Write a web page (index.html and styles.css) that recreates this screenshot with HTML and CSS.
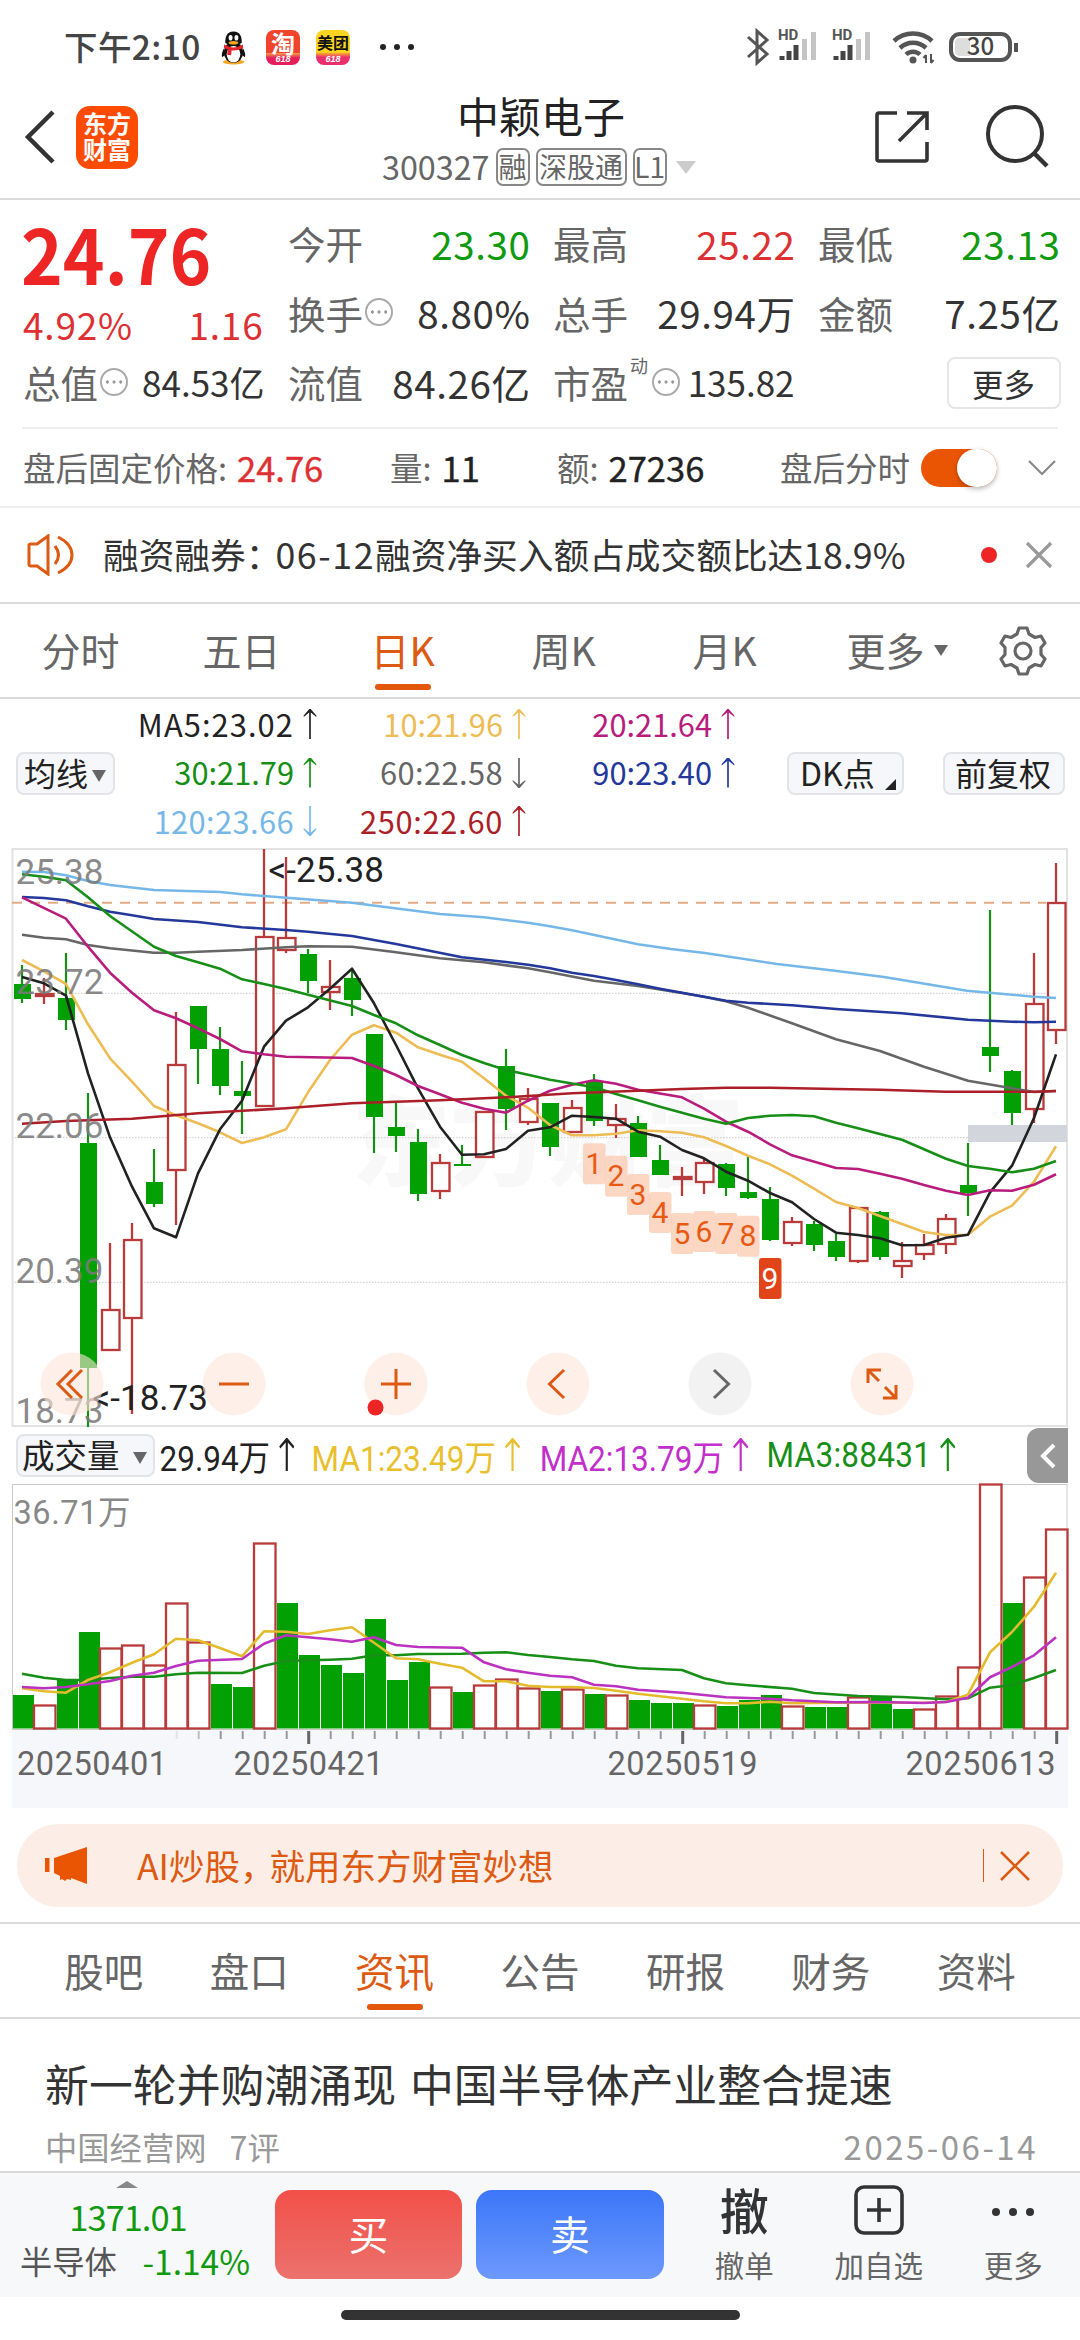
FILE: index.html
```html
<!DOCTYPE html>
<html lang="zh-CN">
<head>
<meta charset="utf-8">
<title>中颖电子 300327</title>
<link rel="stylesheet" href="styles.css">
</head>
<body>
<div class="phone">
  <div class="status">
    <span class="clock">下午2:10</span>
    <svg class="app" viewBox="0 0 36 36"><ellipse cx="18" cy="33" rx="11" ry="2.6" fill="#f5a623"/><path d="M8 19Q5 25 6.500 28L10 25Z M28 19Q31 25 29.500 28L26 25Z" fill="#111"/><ellipse cx="18" cy="23" rx="10" ry="11" fill="#111"/><ellipse cx="18" cy="25" rx="7" ry="8.500" fill="#fff"/><path d="M18 1.500C11 1.500 9.500 7 9.500 13Q18 20 26.500 13C26.500 7 25 1.500 18 1.500Z" fill="#111"/><ellipse cx="15" cy="8" rx="2" ry="2.900" fill="#fff"/><ellipse cx="21" cy="8" rx="2" ry="2.900" fill="#fff"/><ellipse cx="18" cy="13" rx="5" ry="1.800" fill="#f5a623"/><path d="M8.500 15Q18 21 27.500 15L28 18.500Q22 21.500 16 21L15.500 26L11.500 25.500L12 20Q9.500 19.500 8 18Z" fill="#e5242b"/></svg>
    <span class="app taobao"><b>淘</b><i>618</i></span>
    <span class="app meituan"><b>美团</b><i>618</i></span>
    <span class="dots"><i></i><i></i><i></i></span>
    <svg class="sys" viewBox="0 0 280 40" fill="none">
      <path d="M6 10L25 27L15 36V4L25 13L6 30" stroke="#555" stroke-width="3"/>
      <g id="sig1"><text x="36" y="13" class="hd">HD</text><path d="M40 33V29M47 33V24M54 33V18" stroke="#444" stroke-width="5"/><path d="M62 33V12M71 33V5" stroke="#c4c4c4" stroke-width="5" transform="translate(.5 0)"/></g>
      <use href="#sig1" x="54"/>
      <path d="M152 14A28 28 0 0 1 190 14M158 21A19 19 0 0 1 184 21M164 27.500A10 10 0 0 1 178 27.500" stroke="#555" stroke-width="4.500"/><circle cx="171" cy="33" r="3.500" fill="#555"/>
      <path d="M184 28V36M184 28L181.500 31M189 27V36M189 36L191.500 33" stroke="#555" stroke-width="2"/>
      <rect x="209" y="7" width="59" height="26" rx="9" stroke="#555" stroke-width="4"/><path d="M218 11h10v18h-10q-5 0-5-5v-8q0-5 5-5z" fill="#ddd"/><text x="238.500" y="28" class="batt">30</text><path d="M274 16V25" stroke="#555" stroke-width="4"/>
    </svg>
  </div>

  <header class="head">
    <svg class="back" viewBox="0 0 32 56"><path d="M29 3L4 28L29 53" fill="none" stroke="#333" stroke-width="4.500"/></svg>
    <div class="logo">东方<br>财富</div>
    <div class="name">
      <h1>中颖电子</h1>
      <div class="code"><span>300327</span><em>融</em><em>深股通</em><em>L1</em><s></s></div>
    </div>
    <svg class="share" viewBox="0 0 56 56"><path d="M23 5H5Q3 5 3 7V51Q3 53 5 53H51Q53 53 53 51V34M33 5H53V22M53 5L25 33" fill="none" stroke="#333" stroke-width="3.600"/></svg>
    <svg class="search" viewBox="0 0 70 70"><circle cx="30" cy="30" r="27" fill="none" stroke="#333" stroke-width="4"/><path d="M49 49L62 62" stroke="#333" stroke-width="4.500"/></svg>
  </header>

  <section class="quote">
    <div class="col main">
      <strong>24.76</strong>
      <div class="chg"><span>4.92%</span><span>1.16</span></div>
      <div class="cell small"><label>总值</label><i class="tip"></i><span>84.53亿</span></div>
    </div>
    <div class="col">
      <div class="cell"><label>今开</label><span class="dn">23.30</span></div>
      <div class="cell"><label>换手</label><i class="tip"></i><span>8.80%</span></div>
      <div class="cell"><label>流值</label><span>84.26亿</span></div>
    </div>
    <div class="col">
      <div class="cell"><label>最高</label><span class="up">25.22</span></div>
      <div class="cell"><label>总手</label><span>29.94万</span></div>
      <div class="cell small"><label>市盈</label><sup>动</sup><i class="tip"></i><span>135.82</span></div>
    </div>
    <div class="col">
      <div class="cell"><label>最低</label><span class="dn">23.13</span></div>
      <div class="cell"><label>金额</label><span>7.25亿</span></div>
      <div class="cell end"><button class="more">更多</button></div>
    </div>
  </section>

  <section class="after">
    <div>盘后固定价格: <b class="up">24.76</b></div>
    <div>量: <b>11</b></div>
    <div>额: <b>27236</b></div>
    <div>盘后分时</div>
    <span class="toggle"></span>
    <svg class="chev" viewBox="0 0 30 18"><path d="M2 2L15 15L28 2" fill="none" stroke="#888" stroke-width="2.200"/></svg>
  </section>

  <section class="notice">
    <svg class="speaker" viewBox="0 0 48 42" fill="none" stroke="#dd5a12" stroke-width="3"><path d="M2 11Q2 10 4 10H10L21 2V40L10 32H4Q2 32 2 30Z"/><path d="M28 12Q35 21 28 30M31 3Q45 10 45 21Q45 32 31 39"/></svg>
    <p>融资融券<span class="punct">：</span><span class="day">06-12</span>融资净买入额占成交额比达18.9%</p>
    <i class="reddot"></i>
    <svg class="x" viewBox="0 0 28 28"><path d="M2 2L26 26M26 2L2 26" stroke="#999" stroke-width="3.200"/></svg>
  </section>

  <nav class="periods">
    <a>分时</a><a>五日</a><a class="on">日K</a><a>周K</a><a>月K</a><a>更多<s></s></a>
    <svg class="gear" viewBox="0 0 48 50" fill="none" stroke="#666" stroke-width="3.200" stroke-linejoin="round"><path d="M20 2H28L30 8L36 11.500L42 10L46 17L42 21.500V28.500L46 33L42 40L36 38.500L30 42L28 48H20L18 42L12 38.500L6 40L2 33L6 28.500V21.500L2 17L6 10L12 11.500L18 8Z"/><circle cx="24" cy="25" r="8"/></svg>
  </nav>

  <section class="legend">
    <button class="chip">均线<s></s></button>
    <div class="mas">
      <span class="c5">MA5:23.02<u></u></span><span class="c10">10:21.96<u></u></span><span class="c20">20:21.64<u></u></span>
      <span class="c30">30:21.79<u></u></span><span class="c60">60:22.58<u class="d"></u></span><span class="c90">90:23.40<u></u></span>
      <span class="c120">120:23.66<u class="d"></u></span><span class="c250">250:22.60<u></u></span>
    </div>
    <button class="chip dk">DK点<s></s></button>
    <button class="chip fq">前复权</button>
  </section>

  <section class="kline">
    <svg id="kchart" width="1080" height="580" viewBox="0 848 1080 580"></svg>
    <div class="tools">
      <svg viewBox="-32 -32 64 64"><circle r="31.500"/><path d="M0 -14L-14 0L0 14M10 -14L-4 0L10 14"/></svg>
      <svg viewBox="-32 -32 64 64"><circle r="31.500"/><path d="M-15 0H15"/></svg>
      <svg viewBox="-32 -32 64 64"><circle r="31.500"/><path d="M-15 0H15M0 -15V15"/><circle class="dot" cx="-20.500" cy="23.500" r="8"/></svg>
      <svg viewBox="-32 -32 64 64"><circle r="31.500"/><path d="M6 -14L-8.500 0L6 14"/></svg>
      <svg class="off" viewBox="-32 -32 64 64"><circle r="31.500"/><path d="M-6 -14L8.500 0L-6 14"/></svg>
      <svg viewBox="-32 -32 64 64"><circle r="31.500"/><path d="M-14 -1V-14H-1M-14 -14L-3 -3M14 1V14H1M14 14L3 3"/></svg>
    </div>
  </section>

  <section class="vhead">
    <button class="chip">成交量<s></s></button>
    <div class="vlegend"><span class="v0">29.94万<u></u></span><span class="v1">MA1:23.49万<u></u></span><span class="v2">MA2:13.79万<u></u></span><span class="v3">MA3:88431<u></u></span></div>
    <button class="fold"><svg viewBox="0 0 16 26"><path d="M14 2L3 13L14 24" fill="none" stroke="#fff" stroke-width="4"/></svg></button>
  </section>
  <svg id="vchart" class="vchart" width="1080" height="325" viewBox="0 1483 1080 325"></svg>

  <div class="banner">
    <svg class="horn" viewBox="0 0 44 38" fill="#ea5504"><path d="M0 11H4.500V25H0ZM9 11L42 0V37L26 31V33L22 32L20 34L17 32L15 33V29L9 26Z"/></svg>
    <p>AI炒股<span class="punct">，</span>就用东方财富妙想</p>
    <i></i>
    <svg class="x" viewBox="0 0 30 30"><path d="M1 1L29 29M29 1L1 29" stroke="#dd5a12" stroke-width="2.600"/></svg>
  </div>

  <nav class="tabs"><a>股吧</a><a>盘口</a><a class="on">资讯</a><a>公告</a><a>研报</a><a>财务</a><a>资料</a></nav>

  <article class="news">
    <h2>新一轮并购潮涌现 中国半导体产业整合提速</h2>
    <div class="meta"><span>中国经营网</span><span>7评</span><time>2025-06-14</time></div>
  </article>

  <footer class="bar">
    <div class="index"><s></s><b>1371.01</b><div><span>半导体</span><em>-1.14%</em></div></div>
    <button class="trade buy">买</button>
    <button class="trade sell">卖</button>
    <div class="act first"><strong>撤</strong><span>撤单</span></div>
    <div class="act"><svg viewBox="0 0 50 50" fill="none" stroke="#333" stroke-width="3.600"><rect x="2" y="2" width="46" height="46" rx="8"/><path d="M25 13V37M13 25H37"/></svg><span>加自选</span></div>
    <div class="act"><svg viewBox="0 0 50 50" fill="#333"><circle cx="8" cy="27" r="4"/><circle cx="25" cy="27" r="4"/><circle cx="42" cy="27" r="4"/></svg><span>更多</span></div>
  </footer>
  <div class="home"><i></i></div>
</div>
<script src="chart.js"></script>
</body>
</html>
```
FILE: styles.css
```css
* { box-sizing: border-box; margin: 0; padding: 0; }
body { width: 1080px; background: #fff; color: #333; font-family: "Noto Sans CJK SC", "Noto Sans", sans-serif; line-height: 1; }
button { font: inherit; color: inherit; background: none; border: 0; }
i, em { font-style: normal; }
s, u { text-decoration: none; display: inline-block; flex: none; }
svg { display: block; flex: none; }
.phone { width: 1080px; height: 2340px; overflow: hidden; display: flex; flex-direction: column; }
.phone > * { flex: none; }
.up { color: #dd3033 !important; }
.dn { color: #109a10 !important; }

/* status bar */
.status { height: 92px; padding: 2px 0 0 64px; display: flex; align-items: center; }
.clock { width: 152px; font-size: 33.500px; font-weight: 500; color: #444; letter-spacing: .4px; padding-bottom: 2px; }
.app { width: 35px; height: 35px; margin-right: 15px; border-radius: 8px; }
.taobao, .meituan { display: flex; flex-direction: column; align-items: center; color: #fff; }
.app b { font-size: 24px; line-height: 25px; }
.app i { font: italic 700 9px/9px "Liberation Sans", sans-serif; }
.taobao { background: linear-gradient(#f1442c 0 65%, #f5a04a 66%, #e61e5c 80%); width: 34px; margin-right: 16px; }
.meituan { background: linear-gradient(#fbd51f 0 64%, #f9b52c 65%, #ea2f6d 78%); width: 34px; }
.meituan b { font-size: 16px; line-height: 25px; color: #111; }
.dots { display: flex; gap: 8px; margin-left: 15px; }
.dots i { width: 6px; height: 6px; border-radius: 3px; background: #222; }
.sys { width: 280px; height: 40px; margin-left: auto; transform: translateX(-58px); }
.hd { font: 700 15px Roboto, sans-serif; fill: #555; }
.batt { font: 500 24px "Noto Sans CJK SC", sans-serif; fill: #444; text-anchor: middle; }

/* title bar */
.head { height: 108px; border-bottom: 2px solid #dadada; display: grid; grid-template-columns: 76px 62px 530px 206px 111px 1fr; }
.back { width: 32px; height: 56px; margin: 17px 0 0 24px; }
.logo { width: 62px; height: 63px; margin-top: 14px; border-radius: 14px; background: #fe4b04; color: #fff; font-size: 24px; font-weight: 700; line-height: 26px; text-align: center; padding-top: 4px; }
.name { padding-left: 244px; white-space: nowrap; grid-column: 3 / span 2; }
h1 { font-size: 42px; font-weight: 400; line-height: 48px; color: #222; margin: -1px 0 0 75px; }
.code { display: flex; align-items: center; height: 40px; margin-top: 8px; font-size: 32.300px; color: #666; gap: 6px; }
.code span { margin-top: -1px; }
.code em { height: 38px; border: 2px solid #888; border-radius: 7px; font-size: 28px; line-height: 32px; width: 34px; display: flex; justify-content: center; }
.code em:nth-of-type(2) { width: 91px; }
.code s { border: 10px solid transparent; border-top: 13px solid #ccc; border-bottom: 0; margin-left: 3px; }
.share { margin-top: 16px; width: 56px; height: 56px; grid-column: 5; }
.search { margin-top: 12px; width: 70px; height: 70px; grid-column: 6; }

/* quote */
.quote { height: 229px; margin: 0 22px; padding: 8px 0 0 1px; border-bottom: 2px solid #eee; display: grid; grid-template-columns: repeat(4, 240.500px); column-gap: 24.500px; }
.cell { height: 69.500px; display: flex; align-items: center; font-size: 38.500px; }
.cell label { color: #666; font-size: 37.500px; }
.cell span { margin-left: auto; letter-spacing: .6px; margin-right: -2px; }
.cell.small span { font-size: 35px; letter-spacing: 0; margin-right: -1px; }
.cell sup { font-size: 18px; color: #666; margin: -34px 2px 0 2px; }
.cell.end { justify-content: flex-end; }
.tip { width: 28px; height: 28px; margin-left: 2px; border: 2px solid #aaa; border-radius: 50%; display: flex; background: radial-gradient(circle 1.800px, #999 90%, transparent) 2px 50% / 6.700px 100% repeat-x; background-clip: content-box; padding: 0 2px; }
.main strong { display: block; height: 93px; font: 700 75px/90px "Noto Sans CJK SC", sans-serif; color: #ee2525; margin-left: -2px; transform: scaleX(.945); transform-origin: left; }
.chg { height: 46px; display: flex; justify-content: space-between; align-items: center; font-size: 37px; letter-spacing: .8px; color: #dd3033; }
.more { width: 114px; height: 52px; border: 2px solid #e6e6e6; border-radius: 8px; font-size: 31.500px; line-height: 46px; margin: 3px -2px 0 0; }

/* after-hours row */
.after { height: 79px; border-bottom: 2px solid #eee; display: grid; grid-template-columns: 367px 167px 223px 140px 99px 1fr; align-items: center; padding-left: 23px; font-size: 32.500px; color: #666; white-space: nowrap; }
.after div { display: flex; align-items: center; gap: 10px; padding-bottom: 1px; }
.after b { font-weight: 400; font-size: 34.500px; color: #222; -webkit-text-stroke: .4px currentColor; }
.toggle { width: 76px; height: 38px; border-radius: 19px; background: #ea5504; position: relative; margin-left: 1px; }
.toggle::after { content: ""; position: absolute; right: 0; top: 0; width: 40px; height: 38px; border-radius: 19px; background: #fff; box-shadow: 0 2px 5px rgba(0,0,0,.28); }
.chev { width: 30px; height: 18px; margin-left: 8px; }

/* notice */
.notice { height: 96px; border-bottom: 2px solid #dadada; display: flex; align-items: center; padding: 0 0 1px 27px; }
.speaker { width: 48px; height: 42px; margin-right: 28px; }
.notice p { width: 878px; font-size: 35.700px; white-space: nowrap; padding-bottom: 2px; }
.punct { letter-spacing: -6px; }
.day { letter-spacing: 1.600px; }
.reddot { width: 16px; height: 16px; border-radius: 8px; background: #ee2525; margin-right: 28px; }
.x { width: 28px; height: 28px; }

/* chart period tabs */
.periods { height: 95px; border-bottom: 2px solid #dadada; display: grid; grid-template-columns: 161px 161px 161px 161px 161px 184px 1fr; align-items: center; font-size: 39px; color: #666; }
.periods a { text-align: center; padding-bottom: 3px; }
.periods a s { border: 7px solid transparent; border-top: 11px solid #666; border-bottom: 0; margin: 0 0 10px 9px; }
.on { color: #dd5a12; position: relative; }
.on::after { content: ""; position: absolute; left: 50%; top: 54px; margin-left: -28px; width: 56px; height: 6px; border-radius: 3px; background: #e2570c; }
.gear { width: 48px; height: 50px; margin-left: 10px; }

/* moving average legend */
.legend { height: 149px; display: grid; grid-template-columns: 16px 99px 672px 117px 39px 122px; align-items: center; }
.legend .chip:first-child { grid-column: 2; }
.legend .dk { grid-column: 4; }
.legend .fq { grid-column: 6; }
.chip { height: 43px; border: 2px solid #e2e4e8; border-radius: 8px; background: #f6f7fa; font-size: 32px; line-height: 34px; color: #222; white-space: nowrap; padding: 0 0 3px 6px; text-align: left; }
.chip s { border: 7px solid transparent; border-top: 12px solid #666; border-bottom: 0; margin-left: 4px; margin-bottom: 4px; }
.chip.dk s { border: 0; border-left: 11px solid transparent; border-bottom: 11px solid #222; margin: 0 0 -4px 10px; }
.chip.dk { padding-left: 11px; }
.chip.fq { padding-left: 10px; }
.mas { display: grid; grid-template-columns: 202px 209px 209px; grid-auto-rows: 48.500px; padding-bottom: 2px; }
.mas span { display: flex; align-items: center; justify-content: flex-end; font-size: 30.800px; white-space: nowrap; }
.mas u { width: 14px; height: 30px; margin-left: 9px; background: currentColor; clip-path: polygon(45% 0, 55% 0, 95% 22%, 95% 27%, 56% 12%, 56% 100%, 44% 100%, 44% 12%, 5% 27%, 5% 22%); }
.mas u.d { transform: scaleY(-1); }
.mas .c5 { letter-spacing: 1.100px; } .mas .c250 { letter-spacing: .7px; } .mas .c120, .mas .c60 { letter-spacing: .4px; }
.c5 { color: #222; } .c10 { color: #edbc55; } .c20 { color: #b81c7c; } .c30 { color: #178f17; }
.c60 { color: #666; } .c90 { color: #24389b; } .c120 { color: #75b8e8; } .c250 { color: #ac1f28; }

/* candle chart */
.kline { height: 580px; position: relative; }
.kline svg { overflow: visible; }
.tools { position: absolute; left: 40px; top: 504px; display: flex; gap: 98px; }
.tools svg { width: 64px; height: 64px; }
.tools circle { fill: #fde6da; fill-opacity: .6; }
.tools .off circle { fill: #eaeaea; }
.tools .dot { fill: #ee2525; fill-opacity: 1; }
.tools path { fill: none; stroke: #dd5a12; stroke-width: 3; }
.tools .off path { stroke: #666; }
.lab { font: 35px Roboto, sans-serif; fill: #7a7a7a; fill-opacity: .88; }
.note { font: 35px Roboto, sans-serif; fill: #222; }
.axis { font: 32.500px Roboto, sans-serif; fill: #666; }
.vmax { font: 32.500px Roboto, "Noto Sans CJK SC", sans-serif; fill: #888; }
.nine { font: 30px Roboto, sans-serif; fill: #e85a14; text-anchor: middle; }
.mark { font: 900 98px "Noto Sans CJK SC", sans-serif; fill: #f8f8f9; }

/* volume */
.vhead { height: 55px; display: grid; grid-template-columns: 16px 139px 872px 41px; align-items: center; }
.vhead .chip { grid-column: 2; font-size: 32.500px; padding-left: 4px; }
.vhead .chip s { margin-left: 13px; }
.vlegend { display: grid; grid-template-columns: 169px 253.500px 252px 200px; padding-left: 5px; font: 35px Roboto, "Noto Sans CJK SC", sans-serif; transform: scaleX(.9); transform-origin: left; white-space: nowrap; }
.vlegend span { display: flex; align-items: center; }
.vlegend u { width: 17px; height: 33px; margin: 0 0 2px 10px; background: currentColor; clip-path: polygon(46% 0, 54% 0, 100% 26%, 92% 32%, 57% 14%, 57% 100%, 43% 100%, 43% 14%, 8% 32%, 0 26%); }
.v0 { color: #222; } .v1 { color: #e9bf2e; } .v2 { color: #c22fcb; } .v3 { color: #178f17; letter-spacing: .3px; }
.fold { height: 55px; border-radius: 12px 0 0 12px; background: #989898; padding-left: 13px; }
.fold svg { width: 16px; height: 26px; }

/* promo banner */
.banner { height: 83px; margin: 16px 17px 15px; border-radius: 41px; background: #fceee6; color: #dd5a12; display: flex; align-items: center; padding-left: 28px; font-size: 35.500px; }
.banner .horn { width: 44px; height: 38px; margin-right: 48px; }
.banner p { width: 846px; padding-bottom: 1px; }
.banner i { width: 1px; height: 33px; background: #dd5a12; margin-right: 16px; }
.banner .x { width: 30px; height: 30px; }

.tabs { height: 97px; border-top: 2px solid #dadada; border-bottom: 2px solid #dadada; display: grid; grid-template-columns: repeat(7, 1fr); padding: 0 31px; align-items: center; text-align: center; font-size: 39.500px; color: #666; }
.tabs a { padding-bottom: 2px; }

.news { height: 152px; padding: 41px 45px 0; }
.news h2 { font-size: 43.900px; line-height: 46px; font-weight: 400; white-space: nowrap; word-spacing: 4px; }
.meta { display: flex; font-size: 32.300px; color: #999; margin-top: 24px; line-height: 32px; }
.meta span { margin-right: 23px; }
.meta time { margin-left: auto; font-size: 33px; letter-spacing: 2.500px; margin-right: -3px; }

/* bottom bar */
.bar { height: 126px; border-top: 2px solid #dadada; background: #f6f8fa; display: grid; grid-template-columns: 255px 187px 14px 188px 13px 134.500px 134.500px 134.500px; padding-left: 20px; }
.index { position: relative; padding-top: 26px; }
.index s { position: absolute; left: 96px; top: 8px; border: 11px solid transparent; border-bottom: 7px solid #888; border-top: 0; }
.index b { display: block; width: 216px; font-weight: 400; font-size: 34.500px; letter-spacing: -1px; text-align: center; color: #109a10; }
.index div { display: flex; width: 230px; justify-content: space-between; align-items: center; font-size: 32.300px; color: #555; margin-top: 10px; }
.index em { color: #109a10; font-size: 33.500px; }
.trade { height: 89px; margin-top: 17px; border-radius: 16px; color: #fff; font-size: 40px; line-height: 83px; padding-bottom: 3px; }
.buy { background: linear-gradient(#f25049, #ec716c); }
.sell { grid-column: 4; background: linear-gradient(#3c76f8, #6c99fd); }
.act { display: flex; flex-direction: column; align-items: center; padding-top: 12px; font-size: 29.500px; color: #666; }
.act.first { grid-column: 6; }
.act strong { font-size: 49px; height: 50px; line-height: 48px; font-weight: 500; color: #333; margin-bottom: 15px; }
.act svg { width: 50px; height: 50px; margin-bottom: 15px; }
.home { height: 43px; padding-top: 13px; }
.home i { display: block; width: 399px; height: 10px; margin: 0 auto; border-radius: 5px; background: #333; }
```
FILE: chart.js
```js
const STEP = 22, X0 = 22;
const GREEN = '#03a003', RED = '#b93a3a';
const x = i => X0 + STEP * i;

// [direction, high, body top, body bottom, low] in chart units
const candles = [
  ['g',965,984,999,1003],['r',978,993,997,1004],['g',953,998,1020,1030],['g',1093,1143,1368,1427],
  ['r',1243,1309,1351,1351],['r',1223,1239,1319,1414],['g',1149,1182,1204,1207],['r',1012,1064,1171,1225],
  ['g',1006,1006,1049,1084],['g',1027,1049,1086,1095],['g',1061,1091,1096,1134],['r',849,936,1107,1107],
  ['r',857,937,951,953],['g',949,954,981,993],['r',960,986,993,1010],['g',970,978,1000,1016],
  ['g',1034,1034,1117,1153],['g',1103,1127,1136,1152],['g',1129,1142,1194,1201],['r',1154,1162,1192,1199],
  ['g',1145,1164,1166,1166],['r',1111,1111,1158,1158],['g',1049,1066,1109,1130],['r',1088,1098,1123,1125],
  ['g',1103,1103,1147,1156],['r',1100,1107,1133,1133],['g',1074,1081,1121,1126],['r',1104,1118,1126,1138],
  ['g',1116,1123,1157,1157],['g',1145,1160,1175,1175],['r',1167,1176,1180,1196],['r',1159,1162,1183,1194],
  ['g',1163,1164,1188,1196],['g',1156,1192,1198,1199],['g',1187,1199,1240,1241],['r',1217,1221,1244,1246],
  ['g',1221,1224,1245,1251],['g',1234,1241,1257,1261],['r',1207,1207,1262,1263],['g',1211,1212,1257,1260],
  ['r',1242,1260,1267,1278],['r',1234,1244,1255,1260],['r',1214,1218,1245,1254],['g',1143,1185,1193,1216],
  ['g',910,1047,1056,1072],['g',1070,1071,1113,1125],['r',953,1003,1110,1123],['r',863,902,1031,1044]
];

const averages = {
  '#666666': '22,934.7 44,937.7 66,939.3 88,945 110,948.3 154,952.7 176,952.7 198,951.7 242,950 286,947.3 308,946.3 352,946.7 396,952.3 440,958.3 484,962.3 528,968.3 550,972.3 594,980.7 638,986 682,993 704,996.7 726,1001.3 748,1007.7 792,1023.3 836,1039.3 880,1051 924,1066.7 968,1080.7 1012,1088.3 1034,1092 1056,1091',
  '#75b8e8': '22,871.7 44,872 66,875.3 88,881 110,885 154,890 220,892 242,894.3 352,902.7 440,914 484,917.3 528,922.7 550,926.3 572,930.3 638,944.3 671,949 705,953 777,964 835,970.7 884,977 967,990.7 1012,994.7 1034,996.7 1056,998',
  '#24389b': '22,897 44,898 66,900.3 88,906.3 110,911.7 132,915.3 154,919 198,922 242,927.3 286,930 308,931.7 352,936 396,944 462,957.3 506,962 528,964.7 550,968.3 572,972.7 594,976 616,980 638,984.3 660,988.7 682,992.7 704,996.7 726,1000.7 748,1002.7 792,1005.3 836,1009 902,1013.3 968,1019.7 1012,1021.7 1034,1022.3 1056,1021.7',
  '#edbc55': '22,960 44,971.3 66,984 88,1024.3 110,1058.3 132,1081.7 154,1106 176,1115.3 198,1123.3 220,1132.3 242,1143 264,1137.3 286,1129.3 308,1092.3 330,1060 352,1034.7 374,1025.3 396,1032.7 418,1047.3 440,1054.7 462,1061.7 484,1078.3 506,1095.7 528,1107.7 550,1125 572,1135.3 594,1135.3 616,1133.7 638,1130.3 660,1131.3 682,1132.7 704,1137.3 726,1146 748,1155.7 770,1164.3 792,1175.7 814,1188.7 836,1202 858,1208 880,1216 902,1224 924,1232 946,1235 968,1234.7 990,1216.7 1012,1205.7 1034,1181.7 1056,1146.3',
  '#222222': '22,977 44,983.3 66,995.7 88,1073.3 110,1137.3 132,1186.7 154,1228.3 176,1237.3 198,1173.3 220,1129.3 242,1100.7 264,1046.7 286,1020.7 308,1007.3 330,988.7 352,968.7 374,1003.3 396,1045 418,1088.3 440,1126.7 462,1154.7 484,1154.3 506,1149 528,1130.7 550,1127.3 572,1115.7 594,1117 616,1118.7 638,1131.7 660,1136.7 682,1150 704,1158.3 726,1171.7 748,1180.7 770,1193 792,1202.3 814,1219 836,1232.7 858,1235 880,1238.3 902,1245.3 924,1245 946,1237.7 968,1234.7 990,1192.3 1012,1165.7 1034,1118 1056,1054.3',
  '#b81c7c': '22,897.3 66,918.7 88,946.7 110,972.7 132,992.7 154,1010.3 176,1018.3 198,1028.3 220,1039 242,1051.3 264,1054.3 286,1056.7 352,1058 374,1066 396,1075 418,1086 440,1094.3 462,1102.7 484,1108.7 506,1112.7 528,1100.7 550,1090.7 572,1084.7 594,1080.3 616,1083.7 638,1089.7 682,1097.3 704,1108.7 726,1121.7 748,1131.7 770,1144.3 792,1155.3 836,1168 858,1169 880,1173.7 902,1178.7 924,1185 946,1190.7 968,1195 990,1190.3 1012,1190.7 1034,1184.7 1056,1174.3',
  '#178f17': '22,874.3 44,876.7 66,880.3 88,897.3 110,916 154,946.7 176,956 198,962.3 220,968.7 242,979.3 264,984 286,989 308,994.7 352,1006 374,1015 396,1023.3 418,1035.3 440,1045 462,1055 484,1063 506,1070 528,1074.7 550,1079.7 594,1087.3 616,1094 638,1100.3 660,1106.7 682,1112.7 704,1118.7 726,1123.7 748,1118 770,1115.7 792,1115 814,1116.3 836,1122.7 858,1128.3 880,1134 902,1139.7 924,1149.3 946,1158.7 968,1166 990,1168.7 1012,1172.3 1034,1168.7 1056,1161',
  '#ac1f28': '22,1123.7 66,1121 132,1118.7 198,1113.3 286,1108.3 352,1103.3 440,1100.3 506,1097.3 540,1095.3 572,1093.3 638,1090.7 682,1089 726,1087.7 770,1087.7 836,1089 880,1089.7 946,1091.7 1034,1091.7 1056,1091'
};

const line = (pts, color) =>
  `<polyline points="${pts}" fill="none" stroke="${color}" stroke-width="2.6" stroke-linejoin="round"/>`;

let k = '<text class="mark" x="352" y="1178">东方财富</text>';
k += '<path d="M12 993.300H1067M12 1137.700H1067M12 1282.300H1067" stroke="#c9c9c9" stroke-width="1" stroke-dasharray="1.500 1.500"/>';
k += '<rect x="12.500" y="849" width="1054.500" height="577" fill="none" stroke="#e2e2e2" stroke-width="2"/>';
k += '<path d="M12 902.700H1046" stroke="#e3ab85" stroke-width="2" stroke-dasharray="10 8"/>';
k += '<rect x="968" y="1125" width="99" height="17" fill="#d2d6dc"/>';
candles.forEach(([d, hi, top, bot, lo], i) => {
  const c = x(i);
  if (d === 'g') {
    k += `<path d="M${c} ${hi}V${lo}" stroke="#178f17" stroke-width="2.2"/><rect x="${c - 8}" y="${top}" width="17" height="${bot - top}" fill="${GREEN}"/>`;
  } else {
    k += `<path d="M${c} ${hi}V${top}M${c} ${bot}V${lo}" stroke="${RED}" stroke-width="2.3"/><rect x="${c - 8}" y="${top + 1}" width="17.500" height="${bot - top - 2}" fill="#fff" stroke="${RED}" stroke-width="2.3"/>`;
  }
});
for (const color in averages) k += line(averages[color], color);
[['25.38', 883.7], ['23.72', 993.7], ['22.06', 1137.7], ['20.39', 1282.7], ['18.73', 1422.7]]
  .forEach(([t, y]) => { k += `<text class="lab" x="15.5" y="${y}">${t}</text>`; });
k += '<text class="note" x="268.500" y="881.700">&lt;-25.38</text><text class="note" x="92.500" y="1409.500">&lt;-18.73</text>';
[1143.3, 1155.7, 1174, 1192, 1213, 1211, 1213, 1215.7, 1258].forEach((y, n) => {
  const c = 594 + STEP * n, last = n === 8;
  k += `<rect x="${c - 11}" y="${y}" width="22.500" height="41" rx="3" fill="${last ? '#e04418' : '#fbc9b0'}" fill-opacity="${last ? 1 : .75}"/>`;
  k += `<text class="nine" x="${c}" y="${y + 30.5}" ${last ? 'style="fill:#fff"' : ''}>${n + 1}</text>`;
});
document.getElementById('kchart').innerHTML = k;

const volTop = [1695,1705,1680,1632,1648,1645,1665,1603,1642,1684,1687,1543,1603,1655,1665,1673,1619,1680,1662,1687,1692,1685,1679,1688,1691,1689,1694,1695,1700,1703,1703,1705,1706,1700,1695,1706,1707,1707,1697,1697,1709,1709,1696,1667,1484,1603,1577,1529];
const volDir = 'grggrrrrrggrgggggggrgrrrgrgrgggrgggrggrggrrrrgrr';
const volLines = {
  '#178f17': '22,1673.7 44,1677.7 66,1680 88,1679.7 110,1678 132,1676.7 154,1676.7 176,1674.3 198,1672.7 242,1673 264,1665.7 286,1661 308,1660.3 330,1659.7 352,1658.7 374,1655.3 396,1655.3 418,1654 462,1653.7 484,1652.7 506,1652.3 528,1655 550,1657 572,1659.3 594,1661 616,1665.7 638,1668.3 682,1670 704,1678.3 726,1683.3 748,1685.3 792,1688.7 814,1693 858,1696 902,1697 946,1699.3 968,1698.3 990,1687.7 1012,1685 1034,1678 1056,1670',
  '#e3bb2c': '22,1688.3 44,1691.3 66,1692.7 88,1680 110,1672.3 132,1662.7 154,1654.3 176,1638.7 198,1640.3 220,1648 242,1656.3 264,1631.3 286,1631.7 308,1634 330,1630.3 352,1627.3 374,1642.7 396,1658.3 418,1659.3 440,1663.7 462,1667.7 484,1681.3 506,1681.3 528,1685.7 550,1687 572,1687 594,1688 616,1690.7 638,1693.7 660,1696.3 682,1698.7 704,1701.3 726,1703.3 748,1703.3 770,1701.7 792,1703.3 836,1702.7 924,1702.7 946,1702 968,1694.7 990,1652.3 1012,1632 1034,1606.7 1056,1572.7',
  '#bb32c0': '22,1687 44,1688.3 66,1687 88,1684.3 110,1681 132,1675.7 154,1672.7 176,1666 198,1660.7 242,1659 264,1643.7 286,1635.3 308,1637.3 330,1639.3 352,1641.7 374,1637.3 396,1645 418,1647 462,1647.7 484,1662.3 506,1669.3 528,1672.7 550,1675.7 572,1677.3 594,1684.7 616,1686.3 638,1689.7 660,1691.3 682,1692.7 704,1695 726,1697.3 748,1698 770,1698.7 792,1700.3 836,1702.3 880,1702 924,1703 946,1702 968,1697.7 990,1677.3 1012,1667 1034,1655.3 1056,1637.3'
};
let v = '<rect x="12" y="1730" width="1056" height="78" fill="#f6f7fa"/><rect x="12.500" y="1484.500" width="1054.500" height="245" fill="#fff" stroke="#cacaca"/>';
volTop.forEach((t, i) => {
  const c = x(i);
  v += volDir[i] === 'g'
    ? `<rect x="${c - 9}" y="${t}" width="21" height="${1728.500 - t}" fill="${GREEN}"/>`
    : `<rect x="${c - 10}" y="${t + .5}" width="21.500" height="${1728 - t}" fill="#fff" stroke="${RED}" stroke-width="2.3"/>`;
});
for (const color in volLines) v += line(volLines[color], color);
for (let i = 7; i < 48; i++) {
  const big = i === 13 || i === 30 || i === 47;
  v += `<path d="M${x(i) + .7} 1731V${big ? 1744 : 1739}" stroke="${big ? '#666' : '#999'}" stroke-width="${big ? 3 : 2}" opacity="${i === 7 ? .2 : i === 8 ? .6 : 1}"/>`;
}
v += '<text class="vmax" x="13.500" y="1524" textLength="117">36.71万</text>';
[['20250401', 17], ['20250421', 233.5], ['20250519', 607.5], ['20250613', 905.5]]
  .forEach(([t, px]) => { v += `<text class="axis" x="${px}" y="1775" textLength="150">${t}</text>`; });
document.getElementById('vchart').innerHTML = v;
```
